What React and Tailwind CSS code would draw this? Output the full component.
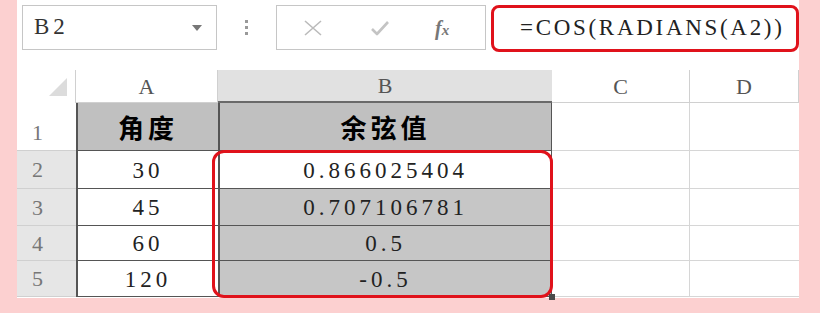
import React from 'react'

const serif = { fontFamily: '"Liberation Serif", "DejaVu Serif", serif' }
const cjk = { fontFamily: '"Noto Sans CJK SC", sans-serif' }

const rows = [
  { n: '2', a: '30', b: '0.866025404', h: 'h-[38px]', active: true },
  { n: '3', a: '45', b: '0.707106781', h: 'h-[37px]' },
  { n: '4', a: '60', b: '0.5', h: 'h-[35px]' },
  { n: '5', a: '120', b: '-0.5', h: 'h-[36px]' },
]

function Toolbar() {
  return (
    <div className="flex items-start h-[70px] pt-[5px] pl-[5px]">
      <div className="w-[195px] h-[45px] border border-[#c6c6c6] flex items-center justify-between pl-[11px] pr-[14px]">
        <span className="text-[23px] tracking-[4px] text-[#333]" style={serif}>B2</span>
        <svg width="10" height="6" viewBox="0 0 10 6"><path d="M0 0h10L5 6z" fill="#777" /></svg>
      </div>
      <div className="w-[59px] h-[45px] flex flex-col items-center justify-center gap-[3px]">
        <span className="w-[3px] h-[3px] bg-[#999]" />
        <span className="w-[3px] h-[3px] bg-[#999]" />
        <span className="w-[3px] h-[3px] bg-[#999]" />
      </div>
      <div className="w-[210px] h-[45px] border border-[#c6c6c6] flex items-center">
        <svg className="ml-[27px]" width="18" height="16" viewBox="0 0 18 16">
          <path d="M1 1L17 15M17 1L1 15" stroke="#bbb" strokeWidth="1.6" fill="none" />
        </svg>
        <svg className="ml-[48px]" width="20" height="16" viewBox="0 0 20 16">
          <path d="M2 9l5 5L18 2" stroke="#c4c4c4" strokeWidth="2.6" fill="none" strokeLinejoin="round" />
        </svg>
        <span className="ml-[45px] text-[20px] italic font-bold text-[#777]" style={serif}>
          f<span className="text-[15px]">x</span>
        </span>
      </div>
      <div className="ml-[5px] w-[308px] h-[47px] border-[3px] border-[#e0121b] rounded-[8px] flex items-center pl-[26px]">
        <span className="text-[23px] tracking-[2.7px] text-[#222]" style={serif}>=COS(RADIANS(A2))</span>
      </div>
    </div>
  )
}

function Sheet() {
  const head = 'h-[33px] flex items-center justify-center text-[22px] text-[#555] border-b border-r border-[#d0d0d0]'
  const rowNum = 'flex items-center pl-[15px] text-[22px] text-[#777] border-b border-[#d0d0d0]'
  const num = 'flex items-center justify-center pt-[3px] text-[23px] tracking-[4px] text-[#222]'
  return (
    <div className="relative" style={serif}>
      <div className="grid grid-cols-[59px_142px_334px_138px_109px]">
        <div className="h-[33px] border-r border-[#d0d0d0] flex items-end justify-end pr-[8px] pb-[7px]">
          <svg width="18" height="18" viewBox="0 0 18 18"><path d="M18 0V18H0z" fill="#dcdcdc" /></svg>
        </div>
        <div className={head}>A</div>
        <div className="h-[33px] flex items-center justify-center text-[22px] text-[#555] bg-[#e1e1e1] border-b-[2px] border-[#6a6a6a]">B</div>
        <div className={head}>C</div>
        <div className={head}>D</div>

        <div className={rowNum + ' h-[48px] items-end pb-[1px] bg-white'}>1</div>
        <div className="h-[48px] bg-[#c0c0c0] border-l-[2px] border-b border-[#555] flex items-center justify-center text-[26px] font-bold tracking-[4px] text-black" style={cjk}>角度</div>
        <div className="h-[48px] bg-[#c0c0c0] border-l-[2px] border-r border-b border-[#555] flex items-center justify-center text-[26px] font-bold tracking-[4px] text-black" style={cjk}>余弦值</div>
        <div className="h-[48px] border-b border-r border-[#d6d6d6]" />
        <div className="h-[48px] border-b border-[#d6d6d6]" />

        {rows.map((r) => (
          <React.Fragment key={r.n}>
            <div className={rowNum + ' ' + r.h + ' bg-[#e6e6e6]'}>{r.n}</div>
            <div className={r.h + ' bg-white border-l-[2px] border-b border-[#555] ' + num}>{r.a}</div>
            <div className={r.h + (r.active ? ' bg-white' : ' bg-[#c6c6c6]') + ' border-l-[2px] border-r border-b border-[#555] ' + num}>{r.b}</div>
            <div className={r.h + ' border-b border-r border-[#d6d6d6]'} />
            <div className={r.h + ' border-b border-[#d6d6d6]'} />
          </React.Fragment>
        ))}
      </div>
      {/* selection outline for B2:B5 */}
      <div className="absolute left-[195px] top-[80px] w-[341px] h-[148px] border-[3px] border-[#e0121b] rounded-[12px] pointer-events-none" />
      <div className="absolute left-[532px] top-[224px] w-[6px] h-[6px] bg-[#4a4a4a]" />
    </div>
  )
}

export default function App() {
  return (
    <div className="w-[820px] h-[313px] bg-[#fcd0d0] overflow-hidden">
      <div className="ml-[17px] w-[782px] h-[298px] bg-white">
        <Toolbar />
        <Sheet />
      </div>
    </div>
  )
}
